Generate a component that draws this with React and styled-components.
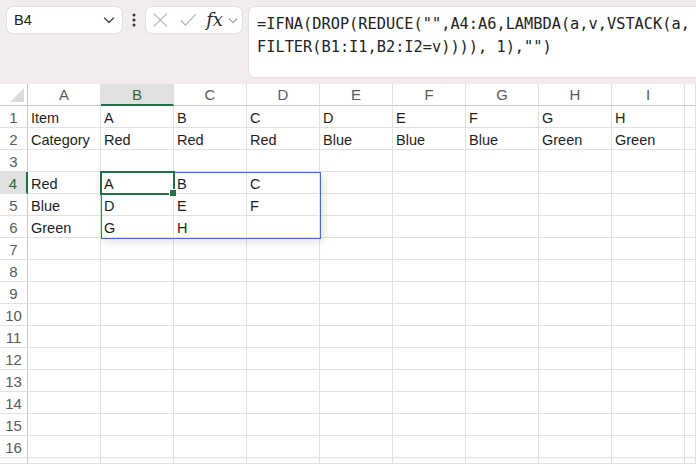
import React from 'react'
import styled, {createGlobalStyle} from 'styled-components'

const Global = createGlobalStyle`
html, body {
  margin: 0;
  padding: 0;
  background: #f3ecec;
  overflow: hidden;
}
* { box-sizing: border-box; }
`

const Page = styled.div`
width: 696px;
height: 464px;
display: flex;
flex-direction: column;
font-family: "Liberation Sans", Arial, sans-serif;
`

const Toolbar = styled.div`
height: 84px;
display: flex;
align-items: flex-start;
padding: 7px 0 7px 7px;
background: #f3ecec;
`

const Box = styled.div`
background: #fff;
border-radius: 6px;
box-shadow: 0 0 0 1px #e6dfdf, 0 1px 2px rgba(0,0,0,0.06);
display: flex;
align-items: center;
`

const NameBox = styled(Box)`
width: 115px;
height: 26px;
padding: 0 6px 0 7px;
justify-content: space-between;
font-size: 14.5px;
color: #222;
`

const Kebab = styled.div`
width: 24px;
height: 26px;
display: flex;
align-items: center;
justify-content: center;
`

const FxBox = styled(Box)`
width: 96px;
height: 26px;
padding: 0 3px 0 6px;
gap: 4px;
`

const Fx = styled.span`
font-family: "DejaVu Serif", "Liberation Serif", serif;
font-style: italic;
font-size: 18px;
color: #2a2a2a;
margin-left: 5px;
line-height: 1;
`

const FormulaBox = styled(Box)`
margin-left: 7px;
flex: 1;
height: 70px;
border-radius: 6px 0 0 6px;
align-items: flex-start;
padding: 6px 0 0 8px;
font-family: "DejaVu Sans Mono", "Liberation Mono", monospace;
font-size: 15.3px;
line-height: 23px;
color: #222;
white-space: pre;
overflow: hidden;
`

const Sheet = styled.div`
position: relative;
flex: 1;
background: #fff;
display: grid;
grid-template-columns: 28px repeat(9, 73px) 1fr;
grid-template-rows: repeat(17, 22px) 1fr;
overflow: hidden;
font-size: 14.5px;
`

const Corner = styled.div`
position: relative;
background: #fff;
border-right: 1px solid #c8c8c8;
border-bottom: 1px solid #c8c8c8;
&::after {
  content: "";
  position: absolute;
  right: 3px;
  bottom: 3px;
  width: 0;
  height: 0;
  border-left: 14px solid transparent;
  border-bottom: 14px solid #dcdcdc;
}
`

const ColHeader = styled.div`
display: flex;
align-items: center;
justify-content: center;
font-size: 15px;
background: ${p => (p.$sel ? '#e1e1e1' : '#fff')};
color: ${p => (p.$sel ? '#1f6b3e' : '#5a5a5a')};
border-right: 1px solid #e1e1e1;
border-bottom: ${p => (p.$sel ? '2px solid #1f7244' : '1px solid #c8c8c8')};
padding-top: ${p => (p.$sel ? '1px' : '0')};
`

const RowHeader = styled.div`
display: flex;
align-items: center;
justify-content: center;
font-size: 15px;
background: ${p => (p.$sel ? '#e1e1e1' : '#fff')};
color: ${p => (p.$sel ? '#1f6b3e' : '#5a5a5a')};
border-right: ${p => (p.$sel ? '2px solid #1f7244' : '1px solid #c8c8c8')};
border-bottom: 1px solid #e1e1e1;
padding-top: 1px;
`

const Cell = styled.div`
border-right: 1px solid #e1e1e1;
border-bottom: 1px solid #e1e1e1;
padding: 2px 0 0 3px;
line-height: 20px;
color: #1e1e1e;
white-space: nowrap;
`

const Range = styled.div`
position: absolute;
left: 101px;
top: 88px;
width: 220px;
height: 67px;
border: 1.5px solid #3b6fd1;
box-shadow: 2px 3px 8px rgba(0,0,0,0.12);
pointer-events: none;
`

const Active = styled.div`
position: absolute;
left: 100px;
top: 87px;
width: 75px;
height: 24px;
border: 2px solid #1f7244;
pointer-events: none;
&::after {
  content: "";
  position: absolute;
  right: -4px;
  bottom: -4px;
  width: 6px;
  height: 6px;
  background: #1f7244;
  border: 1px solid #fff;
}
`

const cols = ['A', 'B', 'C', 'D', 'E', 'F', 'G', 'H', 'I', '']

const data = {
  1: ['Item', 'A', 'B', 'C', 'D', 'E', 'F', 'G', 'H'],
  2: ['Category', 'Red', 'Red', 'Red', 'Blue', 'Blue', 'Blue', 'Green', 'Green'],
  4: ['Red', 'A', 'B', 'C'],
  5: ['Blue', 'D', 'E', 'F'],
  6: ['Green', 'G', 'H'],
}

const Chevron = ({color = '#444', size = 14}) => (
  <svg width={size} height={size} viewBox="0 0 14 14">
    <path d="M2.5 5 L7 9.5 L11.5 5" fill="none" stroke={color} strokeWidth="1.3" strokeLinecap="round" strokeLinejoin="round" />
  </svg>
)

const App = () => {
  const rows = []
  for (let r = 1; r <= 17; r++) rows.push(r)

  return (
    <Page>
      <Global />
      <Toolbar>
        <NameBox>
          <span>B4</span>
          <Chevron />
        </NameBox>
        <Kebab>
          <svg width="4" height="14" viewBox="0 0 4 14">
            <circle cx="2" cy="2" r="1.5" fill="#333" />
            <circle cx="2" cy="7" r="1.5" fill="#333" />
            <circle cx="2" cy="12" r="1.5" fill="#333" />
          </svg>
        </Kebab>
        <FxBox>
          <svg width="18" height="18" viewBox="0 0 18 18">
            <path d="M2 2 L16 16 M16 2 L2 16" stroke="#b4b0b0" strokeWidth="1.2" fill="none" />
          </svg>
          <svg width="20" height="18" viewBox="0 0 20 18" style={{marginLeft: 6}}>
            <path d="M2 9.5 L7 14.5 L18 3" stroke="#b4b0b0" strokeWidth="1.2" fill="none" />
          </svg>
          <Fx>fx</Fx>
          <Chevron color="#999" size={13} />
        </FxBox>
        <FormulaBox>
          {'=IFNA(DROP(REDUCE("",A4:A6,LAMBDA(a,v,VSTACK(a,\nFILTER(B1:I1,B2:I2=v)))), 1),"")'}
        </FormulaBox>
      </Toolbar>
      <Sheet>
        <Corner />
        {cols.map((c, i) => (
          <ColHeader key={i} $sel={c === 'B'}>{c}</ColHeader>
        ))}
        {rows.map(r => (
          <React.Fragment key={r}>
            <RowHeader $sel={r === 4}>{r < 17 ? r : ''}</RowHeader>
            {cols.map((c, i) => (
              <Cell key={i}>{(data[r] && data[r][i]) || ''}</Cell>
            ))}
          </React.Fragment>
        ))}
        <Range />
        <Active />
      </Sheet>
    </Page>
  )
}

export default App
